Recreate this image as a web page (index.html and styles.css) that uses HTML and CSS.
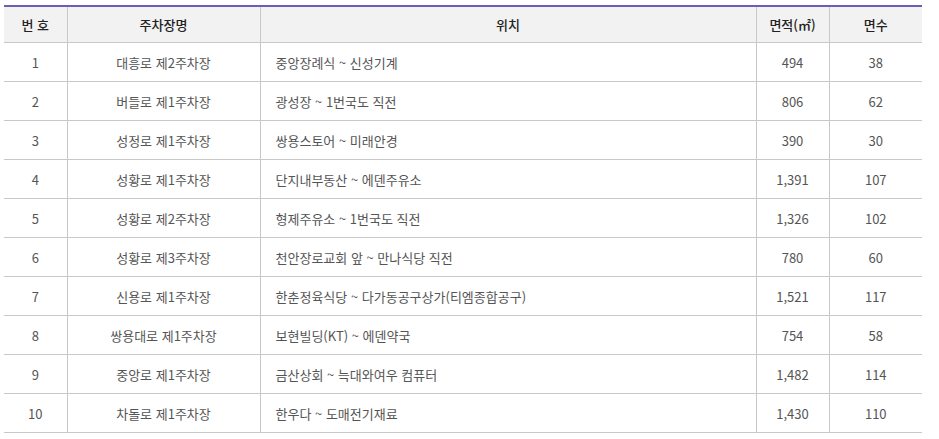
FILE: index.html
```html
<!DOCTYPE html>
<html lang="ko">
<head>
<meta charset="utf-8">
<title>주차장 현황</title>
<link rel="stylesheet" href="styles.css">
</head>
<body>
<table class="park-table">
  <colgroup>
    <col class="c-no"><col class="c-name"><col class="c-loc"><col class="c-area"><col class="c-cnt">
  </colgroup>
  <thead>
    <tr><th>번 호</th><th>주차장명</th><th>위치</th><th>면적(㎡)</th><th>면수</th></tr>
  </thead>
  <tbody>
    <tr><td>1</td><td>대흥로 제2주차장</td><td class="loc">중앙장례식 ~ 신성기계</td><td>494</td><td>38</td></tr>
    <tr><td>2</td><td>버들로 제1주차장</td><td class="loc">광성장 ~ 1번국도 직전</td><td>806</td><td>62</td></tr>
    <tr><td>3</td><td>성정로 제1주차장</td><td class="loc">쌍용스토어 ~ 미래안경</td><td>390</td><td>30</td></tr>
    <tr><td>4</td><td>성황로 제1주차장</td><td class="loc">단지내부동산 ~ 에덴주유소</td><td>1,391</td><td>107</td></tr>
    <tr><td>5</td><td>성황로 제2주차장</td><td class="loc">형제주유소 ~ 1번국도 직전</td><td>1,326</td><td>102</td></tr>
    <tr><td>6</td><td>성황로 제3주차장</td><td class="loc">천안장로교회 앞 ~ 만나식당 직전</td><td>780</td><td>60</td></tr>
    <tr><td>7</td><td>신용로 제1주차장</td><td class="loc">한춘정육식당 ~ 다가동공구상가(티엠종합공구)</td><td>1,521</td><td>117</td></tr>
    <tr><td>8</td><td>쌍용대로 제1주차장</td><td class="loc">보현빌딩(KT) ~ 에덴약국</td><td>754</td><td>58</td></tr>
    <tr><td>9</td><td>중앙로 제1주차장</td><td class="loc">금산상회 ~ 늑대와여우 컴퓨터</td><td>1,482</td><td>114</td></tr>
    <tr><td>10</td><td>차돌로 제1주차장</td><td class="loc">한우다 ~ 도매전기재료</td><td>1,430</td><td>110</td></tr>
  </tbody>
</table>
</body>
</html>
```

FILE: styles.css
```css
html, body {
  margin: 0;
  padding: 0;
  background: #fff;
}
body {
  padding: 5px 17px 0 4px;
  font-family: "Noto Sans CJK KR", "Noto Sans", sans-serif;
  font-size: 13px;
  color: #555;
}
.park-table {
  width: 918px;
  border-collapse: collapse;
  table-layout: fixed;
  border-top: 2px solid #6b5eb3;
}
.c-no { width: 63px; }
.c-name { width: 193px; }
.c-loc { width: 496px; }
.c-area { width: 73px; }
.c-cnt { width: 93px; }
.park-table th {
  height: 35px;
  padding: 0;
  background: #f2f2f2;
  font-weight: 500;
  color: #222;
  text-align: center;
  border-bottom: 1px solid #c8c8c8;
  border-left: 1px solid #c8c8c8;
}
.park-table td {
  height: 38px;
  padding: 0;
  text-align: center;
  border-bottom: 1px solid #c8c8c8;
  border-left: 1px solid #c8c8c8;
}
.park-table th:first-child,
.park-table td:first-child {
  border-left: none;
}
.park-table td.loc {
  text-align: left;
  padding-left: 15px;
}
```
